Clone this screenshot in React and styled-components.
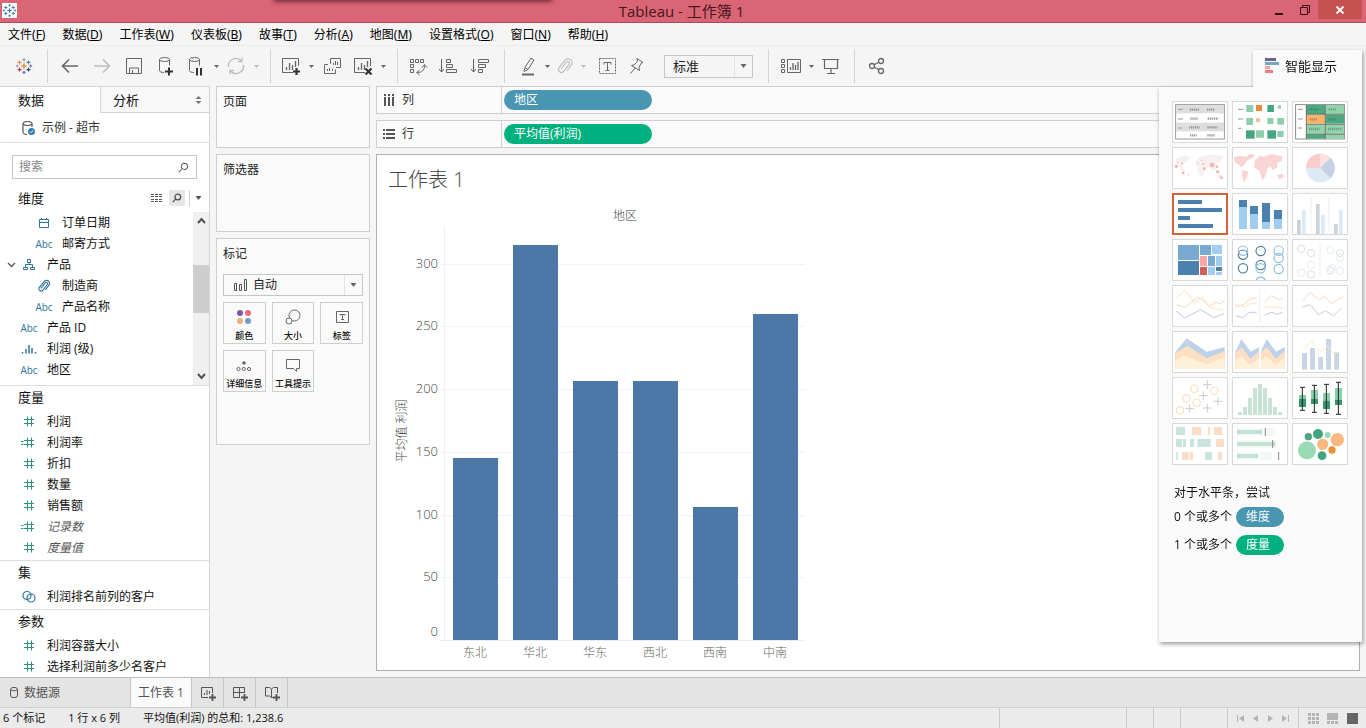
import React from "react";
import styled, { createGlobalStyle } from "styled-components";

const ui = '"Open Sans", "Noto Sans CJK SC", sans-serif';

const Global = createGlobalStyle`
  * { box-sizing: border-box; }
  body { margin: 0; background: #f5f5f5; font: 12px/16px ${ui}; color: #111; }
  button, input, select { font: inherit; color: inherit; }
  button { padding: 0; border: 0; background: none; cursor: pointer; }
  h1, h2, h3, p { margin: 0; font-weight: 400; }
  svg { display: block; flex: none; }
  ul { margin: 0; padding: 0; list-style: none; }
`;

/* ---------- frame ---------- */
const Window = styled.div`
  position: relative;
  display: flex;
  flex-direction: column;
  height: 100vh;
  min-height: 640px;
  overflow: hidden;
`;
const TitleBar = styled.header`
  position: relative;
  flex: none;
  display: flex;
  align-items: flex-start;
  height: 23px;
  background: #d96575;
  border-bottom: 1px solid #a94b58;
`;
const SnapShadow = styled.span`
  position: absolute;
  top: -4px;
  left: 276px;
  width: 274px;
  height: 4px;
  box-shadow: 0 0 4px 2px rgba(60, 10, 20, 0.6);
`;
const AppMark = styled.span`
  margin: 3px 0 0 2px;
  background: #fff;
`;
const Caption = styled.h1`
  flex: 1;
  padding-left: 80px;
  text-align: center;
  font-size: 15px;
  line-height: 23px;
  color: #47161d;
`;
const WinButton = styled.button`
  display: grid;
  place-items: center;
  width: ${(p) => (p.$close ? 44 : 26)}px;
  height: 19px;
  background: ${(p) => (p.$close ? "#c75050" : "none")};
  margin-right: ${(p) => (p.$close ? 4 : 0)}px;
`;
const MenuBar = styled.nav`
  flex: none;
  display: flex;
  gap: 17px;
  align-items: center;
  height: 23px;
  padding: 2px 0 0 8px;
  border-bottom: 1px solid #ebebeb;
  font-family: "Noto Sans", "Noto Sans CJK SC", sans-serif;
`;
const MenuItem = styled.button`
  white-space: nowrap;
  color: #000;
`;

/* ---------- toolbar ---------- */
const Toolbar = styled.div`
  flex: none;
  display: flex;
  align-items: center;
  height: 40px;
`;
const Tool = styled.button`
  display: grid;
  place-items: center;
  flex: none;
  width: ${(p) => p.$w || 28}px;
  height: 32px;
  color: ${(p) => (p.$off ? "#bdbdbd" : "#666")};
`;
const Separator = styled.span`
  flex: none;
  width: 1px;
  height: 34px;
  margin: 0 ${(p) => p.$r || 6}px 0 ${(p) => p.$l || 0}px;
  background: #d4d4d4;
`;
const SelectBox = styled.label`
  display: flex;
  align-items: center;
  height: ${(p) => p.$h}px;
  width: ${(p) => p.$w};
  margin-left: ${(p) => p.$ml || 0}px;
  border: 1px solid #c6c6c6;
  color: #555;
`;
const Picker = styled.select`
  flex: 1;
  min-width: 0;
  padding: 0 0 0 ${(p) => p.$pad}px;
  border: 0;
  background: none;
  appearance: none;
  font-size: ${(p) => p.$size || 12}px;
  color: #222;
`;
const PickerArrow = styled.span`
  display: grid;
  place-items: center;
  width: 18px;
  height: 100%;
  border-left: 1px solid #e2e2e2;
  color: #666;
`;

/* ---------- body ---------- */
const Body = styled.div`
  flex: 1;
  min-height: 0;
  display: flex;
  gap: 6px;
  padding-right: 6px;
`;
const DataPane = styled.aside`
  width: 210px;
  flex: none;
  overflow: hidden;
  background: #fff;
  border-top: 1px solid #d4d4d4;
  border-right: 1px solid #d4d4d4;
`;
const PaneTabs = styled.div`
  display: flex;
  height: 26px;
`;
const PaneTab = styled.button`
  display: flex;
  align-items: center;
  justify-content: space-between;
  width: ${(p) => (p.$active ? "100px" : "auto")};
  flex: ${(p) => (p.$active ? "none" : 1)};
  padding: 0 7px ${(p) => (p.$active ? 1 : 0)}px ${(p) => (p.$active ? 18 : 12)}px;
  font-size: 13px;
  background: ${(p) => (p.$active ? "#fff" : "#f8f8f8")};
  border: solid #d4d4d4;
  border-width: ${(p) => (p.$active ? 0 : "0 0 1px 1px")};
`;
const DataSource = styled.div`
  display: flex;
  align-items: center;
  gap: 6px;
  height: 30px;
  padding-left: 22px;
  color: #333;
  border-bottom: 1px solid #dedede;
`;
const SearchBox = styled.label`
  display: flex;
  align-items: center;
  height: 24px;
  margin: 12px 12px 0;
  padding-right: 7px;
  border: 1px solid #c6c6c6;
  color: #555;
`;
const SearchInput = styled.input`
  flex: 1;
  min-width: 0;
  padding: 0 6px;
  border: 0;
  outline: 0;
  background: none;
  &::placeholder { color: #888; opacity: 1; }
`;
const Section = styled.section`
  border-top: ${(p) => (p.$first ? 0 : 1)}px solid #dedede;
  padding-bottom: ${(p) => (p.$first ? 0 : 2)}px;
`;
const SectionHead = styled.div`
  display: flex;
  align-items: center;
  height: ${(p) => (p.$tall ? 33 : 25)}px;
  padding: ${(p) => (p.$tall ? "5px 2px 0 18px" : "0 2px 3px 18px")};
`;
const SectionTitle = styled.h2`
  flex: 1;
  font-size: 13px;
`;
const HeadTool = styled.button`
  display: grid;
  place-items: center;
  width: ${(p) => p.$w || 16}px;
  height: 16px;
  margin-left: 4px;
  color: #555;
  background: ${(p) => (p.$on ? "#e6e6e6" : "none")};
  border-left: ${(p) => (p.$rule ? 1 : 0)}px solid #ccc;
`;
const ScrollArea = styled.div`
  display: flex;
  height: 173px;
`;
const FieldList = styled.ul`
  flex: 1;
`;
const FieldRow = styled.li`
  display: flex;
  align-items: center;
  height: 21px;
  white-space: nowrap;
  font-style: ${(p) => (p.$auto ? "italic" : "normal")};
  color: ${(p) => (p.$auto ? "#555" : "#111")};
`;
const Indent = styled.span`
  display: flex;
  justify-content: flex-end;
  width: ${(p) => (p.$nested ? 31 : 16)}px;
  color: #555;
`;
const TypeIcon = styled.span`
  display: grid;
  place-items: center;
  width: 26px;
  margin-right: 5px;
  font-size: 10px;
  font-style: normal;
  font-weight: 500;
  color: ${(p) => (p.$measure ? "#2f9179" : "#2f749c")};
`;
const ScrollBar = styled.div`
  display: flex;
  flex-direction: column;
  align-items: center;
  width: 16px;
  padding: 5px 0;
  background: #f0f0f0;
  color: #505050;
`;
const ScrollThumb = styled.span`
  width: 16px;
  height: 48px;
  margin: 40px 0 auto;
  background: #cdcdcd;
`;

/* ---------- cards ---------- */
const Cards = styled.div`
  flex: none;
  display: flex;
  flex-direction: column;
  gap: 6px;
  width: 154px;
`;
const Card = styled.section`
  height: ${(p) => p.$h}px;
  padding: 7px 6px 6px;
  background: #fafafa;
  border: 1px solid #cfcfcf;
`;
const CardTitle = styled.h2`
  font-size: 12px;
  color: #222;
`;
const MarkGrid = styled.div`
  display: grid;
  grid-template-columns: repeat(3, 1fr);
  gap: 6px;
  margin-top: 6px;
`;
const MarkButton = styled.button`
  display: flex;
  flex-direction: column;
  align-items: center;
  justify-content: space-between;
  height: 42px;
  padding-top: 4px;
  font-size: 9px;
  font-weight: 500;
  line-height: 15px;
  white-space: nowrap;
  background: #fafafa;
  border: 1px solid #cfcfcf;
  color: #111;
  svg { color: #666; }
`;
const MarkType = styled.div`
  margin-top: 12px;
`;

/* ---------- view ---------- */
const View = styled.main`
  flex: 1;
  min-width: 0;
  display: flex;
  flex-direction: column;
  gap: 6px;
  padding-bottom: 6px;
`;
const Shelf = styled.div`
  display: flex;
  align-items: center;
  flex: none;
  height: 28px;
  background: #fafafa;
  border: 1px solid #cfcfcf;
`;
const ShelfLabel = styled.span`
  display: flex;
  align-items: center;
  gap: 7px;
  width: 125px;
  height: 100%;
  padding-left: 6px;
  color: #333;
  border-right: 1px solid #cfcfcf;
  svg { color: #555; }
`;
const Pill = styled.button`
  width: ${(p) => p.$w}px;
  height: 20px;
  margin-left: ${(p) => p.$ml}px;
  padding-left: 10px;
  text-align: left;
  line-height: 18px;
  color: #fff;
  border-radius: 10px;
  background: ${(p) => (p.$measure ? "#00b180" : "#4996b2")};
`;
const Worksheet = styled.section`
  flex: 1;
  min-height: 0;
  overflow: hidden;
  padding: 11px;
  background: #fff;
  border: 1px solid #b0b0b0;
`;
const SheetTitle = styled.h2`
  margin-bottom: 6px;
  font-size: 20px;
  font-weight: 300;
  line-height: 28px;
  color: #444;
`;

/* ---------- show me ---------- */
const ShowMe = styled.aside`
  position: absolute;
  top: 50px;
  right: 4px;
  width: 203px;
  filter: drop-shadow(1px 2px 2px rgba(0, 0, 0, 0.4));
`;
const ShowMeTab = styled.button`
  display: flex;
  align-items: center;
  gap: 6px;
  width: 109px;
  height: 37px;
  margin-left: auto;
  padding: 0 0 5px 11px;
  font-size: 13px;
  background: #fafafa;
`;
const ShowMeBody = styled.div`
  height: 555px;
  padding: 14px 13px;
  background: #fafafa;
`;
const Thumbs = styled.div`
  display: grid;
  grid-template-columns: repeat(3, 56px);
  gap: 4px;
  margin-bottom: 17px;
`;
const Thumb = styled.button`
  width: 56px;
  height: 42px;
  background: #fff;
  border: 1px solid ${(p) => (p.$on ? "#cf6238" : "#d9d9d9")};
  box-shadow: ${(p) => (p.$on ? "inset 0 0 0 1px #cf6238" : "none")};
`;
const Hint = styled.p`
  display: flex;
  align-items: center;
  height: ${(p) => (p.$tall ? 28 : 21)}px;
  padding-left: 2px;
`;

/* ---------- bottom ---------- */
const SheetTabs = styled.nav`
  flex: none;
  display: flex;
  height: 31px;
  background: #e4e4e4;
  border-top: 1px solid #bdbdbd;
  border-bottom: 1px solid #cfcfcf;
`;
const SheetTab = styled.button`
  display: flex;
  align-items: center;
  justify-content: ${(p) => (p.$start ? "flex-start" : "center")};
  gap: 5px;
  width: ${(p) => p.$w}px;
  padding-left: ${(p) => (p.$start ? 9 : 0)}px;
  color: #555;
  background: ${(p) => (p.$active ? "#fafafa" : "none")};
  border-right: 1px solid #c6c6c6;
`;
const StatusBar = styled.footer`
  flex: none;
  display: flex;
  align-items: center;
  gap: 23px;
  height: 20px;
  padding-left: 3px;
  font-size: 11px;
  background: #ebebeb;
`;
const StatusCells = styled.div`
  display: flex;
  align-self: stretch;
  margin-left: auto;
`;
const StatusCell = styled.div`
  display: flex;
  align-items: center;
  justify-content: space-evenly;
  width: ${(p) => p.$w}px;
  border-left: 1px solid #c9c9c9;
`;
const StatusButton = styled.button`
  display: grid;
  place-items: center;
  color: ${(p) => p.$c || "#b4b4b4"};
`;

/* ---------- icons ---------- */
const Icon = ({ s = 20, w = s, h = s, sw = 1, children }) => (
  <svg width={w} height={h} viewBox={`0 0 ${w} ${h}`} fill="none" stroke="currentColor" strokeWidth={sw} aria-hidden="true">
    {children}
  </svg>
);
const Plus = ({ x, y, r, c, w = 1 }) => <path d={`M${x - r} ${y}h${r * 2}M${x} ${y - r}v${r * 2}`} stroke={c} strokeWidth={w} />;
const TableauMark = ({ s, mono }) => {
  const k = (c) => mono || c;
  return (
    <svg width={s} height={s} viewBox="0 0 20 20" fill="none" aria-hidden="true">
      <Plus x={10} y={10} r={3} c={k("#eb8a3c")} w={1.5} />
      <Plus x={5} y={6} r={2.2} c={k("#eb8a3c")} w={1.2} />
      <Plus x={15} y={6} r={2.2} c={k("#5b879b")} w={1.2} />
      <Plus x={5} y={14} r={2.2} c={k("#c2334b")} w={1.2} />
      <Plus x={15} y={14} r={2.2} c={k("#1f447e")} w={1.2} />
      <Plus x={10} y={3} r={1.9} c={k("#7099a6")} />
      <Plus x={10} y={17} r={1.9} c={k("#59588c")} />
      <Plus x={2.5} y={10} r={1.6} c={k("#8a8fb8")} />
      <Plus x={17.5} y={10} r={1.6} c={k("#59588c")} />
    </svg>
  );
};
const Caret = () => (
  <svg width="7" height="4" viewBox="0 0 7 4" fill="currentColor" aria-hidden="true"><path d="M0.5 0h6L3.5 4z" /></svg>
);
const SmallCaret = () => (
  <svg width="5" height="3" viewBox="0 0 5 3" fill="currentColor" aria-hidden="true"><path d="M0 0h5L2.500 3z" /></svg>
);
const Magnifier = ({ s = 11, sw = 1.2 }) => (
  <svg width={s} height={s} viewBox="0 0 12 12" fill="none" stroke="currentColor" strokeWidth={sw} aria-hidden="true">
    <circle cx="7" cy="4.7" r="3.4" /><path d="M4.6 7.1L1 11" />
  </svg>
);
const Clip = ({ s = 18, sw = 1.1 }) => (
  <svg width={s} height={s} viewBox="0 0 18 18" fill="none" stroke="currentColor" strokeWidth={sw} aria-hidden="true">
    <path d="M5 12L10.500 5a1.700 1.700 0 0 1 2.700 2.100L7.700 14.300a2.900 2.900 0 0 1-4.600-3.600L9 3.300a3.900 3.900 0 0 1 6.200 4.800L10.800 14" />
  </svg>
);
const Database = ({ children }) => (
  <Icon><ellipse cx="8.500" cy="3.500" rx="5" ry="2" /><path d="M3.500 3.500v11c0 1.200 2 2 4.500 2M13.500 3.500v6" />{children}</Icon>
);
const bars = <path d="M5.500 14v-3M8.500 14V7M11.500 14V9M14.500 11V5" strokeWidth="1.300" />;
const AddChart = ({ mark }) => (
  <Icon>
    <path d="M17.500 10V2.500h-16v14H12" />{bars}
    {mark === "plus" ? <path d="M12 15.500h7M15.500 12v7" strokeWidth="2.200" stroke="#333" /> : <path d="M12.500 12.500l6 6M18.500 12.500l-6 6" strokeWidth="2.200" stroke="#333" />}
  </Icon>
);
const Hash = ({ calc }) => (
  <svg width="16" height="12" viewBox="0 0 16 12" fill="none" stroke="currentColor" aria-hidden="true">
    <path d="M3 3.500h10M3 7.500h10M6.500 0.500v10M10.500 0.500v10" />
    {calc && <path d="M0 4.500h2.500M0 7.500h2.500" />}
  </svg>
);
const Sets = () => <Icon w={16} h={14} sw={1.200}><circle cx="6" cy="5.500" r="4" /><circle cx="10" cy="8" r="4" /></Icon>;
const Hierarchy = () => <Icon w={12} h={12}><path d="M4.500 0.500h3v3h-3zM0.500 8.500h4v2h-4zM7.500 8.500h4v2h-4zM6 3.500v2M2.500 8.500v-3h7v3" /></Icon>;
const Calendar = () => <Icon w={12} h={12}><path d="M1.500 2.500h9v8h-9zM1.500 5.500h9M3.500 1v2M8.500 1v2" /></Icon>;
const Bins = () => <Icon w={16} h={12} sw={1.500}><path d="M1.500 10.500V9M5 10.500V6M8 10.500V2M11 10.500V5M14.500 10.500V9" /></Icon>;
const Chevron = ({ d = "M1 2l3.500 3.500L8 2", sw = 1.300 }) => <Icon w={9} h={8} sw={sw}><path d={d} /></Icon>;

/* ---------- thumbnails (three drawing units to a pixel) ---------- */
const R = ({ c, l }) => l.map((r, i) => <rect key={i} x={r[0]} y={r[1]} width={r[2]} height={r[3]} fill={c} />);
const C = ({ c, l, w = 2.5 }) => l.map((r, i) => <circle key={i} cx={r[0]} cy={r[1]} r={r[2]} fill="none" stroke={c} strokeWidth={w} />);
const D = ({ c, l }) => l.map((r, i) => <circle key={i} cx={r[0]} cy={r[1]} r={r[2]} fill={c} />);
const L = ({ c, d, w = 3 }) => <path d={d} fill="none" stroke={c} strokeWidth={w} />;

const THUMBS = [
  ["文本表", <>
    <rect x="11" y="11" width="146" height="103" fill="#fff" stroke="#888" strokeWidth="2.500" />
    <R c="#dedede" l={[[12, 12, 144, 25], [12, 65, 144, 26]]} />
    <L c="#999" d="M18 25h15M18 54h15M18 81h12" />
    <path d="M53 26h30M105 26h24M55 53h22M107 53h32M51 79h32M106 79h31M54 103h20M106 103h24" stroke="#999" strokeWidth="7" strokeDasharray="4 2" />
  </>],
  ["热图", <>
    <L c="#999" d="M18 25h15M18 54h15M18 82h10" />
    <R c="#8dceab" l={[[43, 12, 21, 21], [43, 51, 20, 21], [72, 88, 24, 22], [106, 51, 18, 18], [136, 51, 20, 20], [136, 90, 19, 18]]} />
    <R c="#45a681" l={[[106, 12, 20, 21], [42, 88, 26, 25], [106, 88, 26, 25]]} />
    <R c="#eb8a3c" l={[[72, 12, 18, 18]]} /><R c="#f7bd8e" l={[[72, 52, 12, 11]]} /><R c="#9ec9b4" l={[[137, 13, 10, 10]]} />
  </>],
  ["突出显示表", <>
    <rect x="11" y="11" width="146" height="103" fill="#fff" stroke="#777" strokeWidth="2.500" />
    <R c="#4aa982" l={[[43, 12, 56, 27], [101, 42, 55, 26], [43, 101, 56, 12]]} />
    <R c="#92d3ac" l={[[101, 12, 55, 27], [43, 71, 56, 28], [101, 71, 55, 28], [101, 101, 55, 12]]} />
    <R c="#f9b26c" l={[[43, 42, 56, 26]]} />
    <L c="#5b5f50" w={2.500} d="M43 12v102M100 12v102M43 40h114M43 70h114M43 100h114" />
    <L c="#999" d="M18 25h15M18 54h15M18 81h12" />
    <path d="M51 25h30M110 25h24M53 55h24M110 55h24M51 84h32M108 84h42" stroke="#3d5a48" opacity=".4" strokeWidth="7" strokeDasharray="4 2" />
  </>],
  ["符号地图", <>
    <path d="M12 35l24-10 18 6-10 14-14 10 10 22-4 14-10-30-14-12zM70 42l16-14 34-6 34 6-4 12-18 10 2 14-14 8-10-12-8 6-12 26-12-18zM136 84l14-4 4 10-14 4z" fill="#f8f0f0" />
    <D c="#f0b4b5" l={[[13, 58, 5], [30, 49, 3], [94, 51, 3], [120, 54, 7], [97, 65, 4], [135, 59, 4], [137, 74, 5], [33, 78, 4], [148, 92, 4], [50, 83, 2], [76, 48, 2], [88, 40, 2], [17, 46, 2]]} />
  </>],
  ["填充地图", <>
    <path d="M6 32l20-5 18 4 6-6 16 2-10 8-12 5-6 12-10 8-10-10-8-4zM32 70l16 4-2 14-10 16-6-20zM70 40l14-12 12 2 22-8 34 8-4 12-14 5 1 14-12 8-8-12-10 8-4 20-10 14-8-28-16-10zM136 86l14-6 6 10-14 6zM48 24l18-2-4 8z" fill="#f9d5d4" stroke="#f5c4c4" />
  </>],
  ["饼图", <>
    <circle cx="85" cy="63" r="43" fill="#dde9f5" />
    <path d="M85 63H42a43 43 0 0 1 43-43z" fill="#fbcccc" /><path d="M85 63V20a43 43 0 0 1 30 12z" fill="#fde1e0" /><path d="M85 63l30-31a43 43 0 0 1 0 62z" fill="#c5d2e5" />
  </>],
  ["水平条", <R c="#4a81ae" l={[[18, 21, 72, 12], [18, 45, 132, 12], [18, 69, 36, 12], [18, 93, 105, 12]]} />],
  ["堆叠条", <>
    <R c="#4a81ae" l={[[21, 21, 24, 21], [54, 39, 24, 24], [90, 30, 24, 57], [126, 51, 24, 27]]} />
    <R c="#a0cdf0" l={[[21, 42, 24, 66], [54, 63, 24, 45], [90, 87, 24, 21], [126, 78, 24, 30]]} />
  </>],
  ["并排条", <>
    <L c="#e4e4e4" w={2} d="M57 12v102M111 12v102" />
    <R c="#ccd2d9" l={[[15, 81, 11, 42], [72, 33, 11, 90], [126, 93, 11, 30]]} /><R c="#dbeaf6" l={[[30, 51, 11, 72], [87, 66, 11, 57], [141, 51, 11, 72]]} />
  </>],
  ["树状图", <>
    <R c="#79a9d1" l={[[18, 18, 63, 45], [84, 18, 33, 30], [108, 51, 21, 30]]} /><R c="#4a81ae" l={[[18, 66, 63, 42], [132, 84, 18, 12]]} />
    <R c="#a0cdf0" l={[[120, 18, 30, 27], [132, 51, 18, 30], [108, 84, 21, 24], [132, 99, 18, 9]]} /><R c="#f9a8a5" l={[[84, 51, 21, 30]]} /><R c="#d35d58" l={[[84, 84, 21, 24]]} />
  </>],
  ["圆视图", <>
    <C c="#527da0" w={3.500} l={[[33, 47, 14], [33, 88, 14], [86, 36, 14], [86, 78, 14]]} />
    <C c="#91bddc" w={3.500} l={[[33, 35, 14], [140, 35, 14], [140, 57, 14], [86, 88, 14], [140, 90, 14]]} /><L c="#91bddc" w={3.500} d="M73 123a14 14 0 0 1 26 0" />
  </>],
  ["并排圆", <>
    <L c="#e4e4e4" w={2} d="M84 12v102" /><C c="#dce0e4" w={3} l={[[27, 30, 11], [57, 42, 11], [57, 106, 11], [144, 42, 11], [115, 94, 11]]} />
    <C c="#e8eef3" w={3} l={[[57, 78, 11], [28, 101, 11], [115, 33, 11], [144, 56, 11], [144, 95, 11], [120, 88, 11]]} />
  </>],
  ["连续线", <><L c="#fae4bf" d="M14 37l24-21 32 38 22-18 19 29 25 7 18 2" /><L c="#f9d7bd" d="M14 60l26 6 38-30 34 27 20-12 12 6 14-12" /><L c="#bfcadb" d="M12 78l26 21 48-25 40 24 30-12" /></>],
  ["离散线", <><L c="#e4e4e4" w={2} d="M83 12v102" /><L c="#fae4bf" d="M10 58l30 8 15-10h20M98 66h18l36 2" /><L c="#f9d7bd" d="M10 66l26-8 18-16 20-4M98 51l20-19 20 10h16" /><L c="#bfcadb" d="M12 92l20 6 20-16h22M98 90l22-8 14 6 18-6" /></>],
  ["双线", <><L c="#f8d9c5" d="M32 48l22-26 28 22 16-10 20 22 36-22" /><L c="#c6cee0" d="M32 66l22-7 26 30 20-12 24 16 24-24" /></>],
  ["连续面积图", <><path d="M10 64l34-42 60 40 54-14v66H10z" fill="#bdd2e8" /><path d="M10 66l36-22 58 38 54-22v54H10z" fill="#fde0c2" /><path d="M10 88l26-14 68 26 54-22v36H10z" fill="#fff0da" /></>],
  ["离散面积图", <>{[0, 76].map((x) => <g key={x} transform={`translate(${x} 0)`}><path d="M10 64l18-40 28 38 26-14v66H10z" fill="#bdd2e8" /><path d="M10 66l18-18 28 36 26-24v54H10z" fill="#fddfc3" /><path d="M10 88l18-12 28 26 26-22v34H10z" fill="#fff0da" /></g>)}<R c="#fff" l={[[82, 12, 5, 104]]} /></>],
  ["双组合", <><R c="#c8d5e4" l={[[30, 66, 15, 50], [54, 51, 15, 65], [79, 78, 14, 38], [102, 24, 15, 92], [127, 63, 14, 53]]} /><L c="#faebca" d="M36 54l22-26 28 36 20-18 20 22 14-6" /></>],
  ["散点图", <><C c="#fadfc0" w={3.500} l={[[67, 35, 11], [43, 64, 11], [74, 77, 11], [127, 41, 11], [24, 100, 11]]} /><L c="#c7ccd4" d="M106 10v26M93 23h26M94 43v26M81 56h26M138 60v26M125 73h26M53 82v26M40 95h26M106 80v26M93 93h26" /></>],
  ["直方图", <R c="#c7e3d6" l={[[18, 105, 12, 9], [33, 90, 12, 24], [48, 63, 12, 51], [63, 33, 12, 81], [78, 21, 12, 93], [93, 33, 12, 81], [108, 63, 12, 51], [123, 90, 12, 24], [138, 105, 12, 9]]} />],
  ["盒须图", <><R c="#89cfaa" l={[[21, 54, 21, 12], [57, 39, 21, 27], [93, 48, 21, 24], [129, 33, 21, 36]]} /><R c="#39976f" l={[[21, 66, 21, 24], [57, 66, 21, 15], [93, 72, 21, 24], [129, 69, 21, 15]]} /><L c="#222" d="M31 31v69M24 31h15M24 100h15M67 25v81M60 25h15M60 106h15M103 22v87M96 22h15M96 109h15M139 16v96M132 16h15M132 112h15" /></>],
  ["甘特图", <><R c="#c9e5db" l={[[12, 12, 27, 24], [12, 48, 18, 24], [33, 48, 9, 24], [54, 48, 12, 24], [76, 48, 40, 24], [12, 87, 5, 24], [99, 87, 21, 24]]} /><R c="#fbdcc4" l={[[60, 12, 27, 24], [108, 12, 6, 24], [126, 12, 24, 24], [132, 48, 24, 24], [30, 87, 20, 24], [54, 87, 9, 24], [138, 87, 12, 24]]} /></>],
  ["标靶图", <><R c="#f3f7f5" l={[[15, 15, 115, 24], [15, 51, 120, 24], [15, 87, 105, 24]]} /><R c="#c4e2d4" l={[[15, 21, 75, 12], [15, 57, 115, 12], [15, 93, 63, 12]]} /><L c="#888" d="M100 15v24M122 51v24M140 87v24" /></>],
  ["填充气泡图", <><D c="#9adbb5" l={[[45, 82, 27], [107, 36, 9]]} /><D c="#3fa680" l={[[78, 33, 15], [90, 98, 13]]} /><D c="#52a282" l={[[49, 41, 11]]} /><D c="#fbb780" l={[[92, 64, 17], [136, 50, 20]]} /><D c="#ec9232" l={[[120, 81, 11]]} /></>],
];

/* ---------- chart ---------- */
const REGIONS = [["东北", 145], ["华北", 314.7], ["华东", 206.4], ["西北", 206.4], ["西南", 106], ["中南", 259.7]];
const BASE = 440;
const LEFT = 57;
const BAND = 60;
const yOf = (v) => Math.round(BASE - v * 1.255);
const ChartSvg = styled.svg`
  font-size: 12px;
  font-weight: 300;
  fill: #444;
`;
const Chart = () => (
  <ChartSvg width="420" height="462" viewBox="0 0 420 462" role="img" aria-label="各地区平均利润">
    <text x="237" y="20" textAnchor="middle">地区</text>
    <text transform="translate(18 231) rotate(-90)" textAnchor="middle">平均值 利润</text>
    <path d={`M${LEFT - 0.5} 26V${BASE}`} stroke="#f0f0f0" />
    {[0, 50, 100, 150, 200, 250, 300].map((t) => (
      <g key={t}>
        <path d={`M${LEFT - 4} ${yOf(t) + 0.5}H417`} stroke={t ? "#f3f3f3" : "#ebebeb"} />
        <text x="50" y={t ? yOf(t) + 4 : BASE - 4} fontSize="13" textAnchor="end">{t}</text>
      </g>
    ))}
    {REGIONS.map(([name, v], i) => (
      <g key={name}>
        <rect x={LEFT + 8 + i * BAND} y={yOf(v)} width="45" height={BASE - yOf(v)} fill="#4c78a8" />
        <text x={LEFT + 30 + i * BAND} y="457" textAnchor="middle" fill="#666">{name}</text>
      </g>
    ))}
  </ChartSvg>
);

const MENUS = [["文件", "F"], ["数据", "D"], ["工作表", "W"], ["仪表板", "B"], ["故事", "T"], ["分析", "A"], ["地图", "M"], ["设置格式", "O"], ["窗口", "N"], ["帮助", "H"]];

const Drop = ({ off, label }) => <Tool $w={12} $off={off} aria-label={label}><SmallCaret /></Tool>;
const Field = ({ icon, name, nested, open, measure, auto }) => (
  <FieldRow $auto={auto}>
    <Indent $nested={nested}>{open && <Chevron />}</Indent>
    <TypeIcon $measure={measure}>{icon}</TypeIcon>
    {name}
  </FieldRow>
);

export default function App() {
  return (
    <Window>
      <Global />
      <TitleBar>
        <SnapShadow />
        <AppMark><TableauMark s={15} mono="#3279b2" /></AppMark>
        <Caption>Tableau - 工作簿 1</Caption>
        <WinButton aria-label="最小化"><Icon w={10} h={12}><path d="M1 10h8" stroke="#3a0d14" strokeWidth="2" /></Icon></WinButton>
        <WinButton aria-label="还原"><Icon w={12} h={12}><path d="M1.500 3.500h7v7h-7zM3.500 3.500v-2h7v7h-2" stroke="#3a0d14" /></Icon></WinButton>
        <WinButton $close aria-label="关闭"><Icon w={10} h={10}><path d="M1.500 1.500l7 7M8.500 1.500l-7 7" stroke="#fff" strokeWidth="1.800" /></Icon></WinButton>
      </TitleBar>
      <MenuBar>
        {MENUS.map(([n, k]) => <MenuItem key={k}>{n}(<u>{k}</u>)</MenuItem>)}
      </MenuBar>

      <Toolbar>
        <Tool $w={47} aria-label="开始页"><TableauMark s={18} /></Tool>
        <Separator />
        <Tool $w={32} aria-label="撤消"><Icon sw={1.600}><path d="M18 10H3M9 3.500L2.500 10 9 16.500" /></Icon></Tool>
        <Tool $w={32} $off aria-label="重做"><Icon sw={1.600}><path d="M2 10h15M11 3.500l6.500 6.500-6.500 6.500" /></Icon></Tool>
        <Tool $w={32} aria-label="保存"><Icon><path d="M2.500 2.500h15v15h-15zM5.500 17v-5h9v5M8.500 17v-3" /></Icon></Tool>
        <Tool $w={32} aria-label="新建数据源"><Database><path d="M9 15.500h8M13 11.500v8" strokeWidth="2" stroke="#333" /></Database></Tool>
        <Tool aria-label="暂停自动更新"><Database><path d="M11 12v7.500M15 12v7.500" strokeWidth="2" stroke="#333" /></Database></Tool>
        <Drop label="自动更新选项" />
        <Tool $off aria-label="运行更新"><Icon sw={1.300}><path d="M2.500 11a7.500 7.500 0 0 1 13-6M17.500 9a7.500 7.500 0 0 1-13 6M12 5.500h4v-4M8 14.500H4v4" /></Icon></Tool>
        <Drop off label="更新选项" />
        <Separator $l={8} />
        <Tool aria-label="新建工作表"><AddChart mark="plus" /></Tool>
        <Drop label="新建选项" />
        <Tool $w={32} aria-label="复制工作表"><Icon><path d="M7.500 8V2.500h10v9H13M10.500 9V7M12.500 9V5M14.500 9V6M5 8.500H1.500v9h11v-4M4.500 15v-2M6.500 15v-3M9.500 15v-2" /></Icon></Tool>
        <Tool aria-label="清除工作表"><AddChart mark="x" /></Tool>
        <Drop label="清除选项" />
        <Separator $l={8} />
        <Tool aria-label="交换行和列"><Icon><path d="M2.500 3.500h3v3h-3zM7.500 3.500h3v3h-3zM12.500 3.500h3v3h-3zM2.500 8.500h3v3h-3zM2.500 13.500h3v3h-3zM9 16.500c5 0 7.500-2 7.500-7M11.500 14l-3 2.500 3 2.500M14 11.500l2.500-3 2.500 3" /></Icon></Tool>
        <Tool $w={32} aria-label="升序排序"><Icon><path d="M3.500 3v13M1 13l2.500 3L6 13M8.500 3.500h4v3h-4zM8.500 8.500h6v3h-6zM8.500 13.500h10v3h-10z" /></Icon></Tool>
        <Tool $w={32} aria-label="降序排序"><Icon><path d="M3.500 3v13M1 13l2.500 3L6 13M8.500 3.500h10v3h-10zM8.500 8.500h7v3h-7zM8.500 13.500h4v3h-4z" /></Icon></Tool>
        <Separator $l={8} $r={12} />
        <Tool $w={24} aria-label="突出显示"><Icon><path d="M6 11.500l6-9.500 3 2-6 9.500-4 2zM6 11.500l3 2" /><path d="M3 18.500h12" strokeWidth="2" /></Icon></Tool>
        <Drop label="突出显示选项" />
        <Tool $w={24} $off aria-label="组成员"><Clip /></Tool>
        <Drop off label="组选项" />
        <Tool $w={36} aria-label="显示标记标签"><Icon><path d="M2.500 2.500h16v15h-16z" strokeDasharray="2 1" /><path d="M7 8.500v-2h7v2M10.500 6.500v8M8.500 14.500h4" /></Icon></Tool>
        <Tool $w={24} aria-label="固定轴"><Icon><path d="M10 2.500l6 4-2 .8-2 4.200.5 3-8-5 3-.8 3-3.700zM8 12l-4.500 5.500" /></Icon></Tool>
        <SelectBox $h={23} $w="89px" $ml={15}>
          <Picker $pad={8} $size={13} aria-label="适合" defaultValue="标准"><option>标准</option><option>整个视图</option></Picker>
          <PickerArrow><Caret /></PickerArrow>
        </SelectBox>
        <Separator $l={15} $r={8} />
        <Tool aria-label="显示/隐藏卡"><Icon><path d="M0.500 3.500h3v3h-3zM0.500 8.500h3v3h-3zM0.500 13.500h3v3h-3zM6.500 3.500h13v13h-13z" /><path d="M9.500 14v-3M12 14V7M14.500 14V9M17 14V6" strokeWidth="1.300" /></Icon></Tool>
        <Drop label="卡选项" />
        <Tool aria-label="演示模式"><Icon><path d="M1 3.500h17M3.500 3.500v9h13v-9M10 12.500v5M6 17.500h8" strokeWidth="1.200" /></Icon></Tool>
        <Separator $l={9} $r={8} />
        <Tool aria-label="共享"><Icon sw={1.300}><circle cx="5" cy="10" r="2.500" /><circle cx="14" cy="5" r="2.500" /><circle cx="14" cy="15" r="2.500" /><path d="M7.200 8.800l4.600-2.500M7.200 11.200l4.600 2.500" /></Icon></Tool>
      </Toolbar>

      <Body>
        <DataPane>
          <PaneTabs>
            <PaneTab $active>数据</PaneTab>
            <PaneTab>分析<svg width="7" height="8" viewBox="0 0 7 8" fill="#777" aria-hidden="true"><path d="M3.500 0L6.500 3h-6zM3.500 8l3-3h-6z" /></svg></PaneTab>
          </PaneTabs>
          <DataSource>
            <Icon w={14} h={16}><ellipse cx="5.500" cy="3.500" rx="4.500" ry="2" /><path d="M1 3.500v9c0 1 1.500 2 4 2M10 3.500V7" /><circle cx="9.500" cy="11.500" r="3.500" fill="#2f7cae" stroke="none" /><path d="M8 11.500l1.200 1.200 2-2.400" stroke="#fff" /></Icon>
            示例 - 超市
          </DataSource>
          <SearchBox><SearchInput placeholder="搜索" aria-label="搜索" /><Magnifier sw={1.100} /></SearchBox>
          <Section $first>
            <SectionHead $tall>
              <SectionTitle>维度</SectionTitle>
              <HeadTool aria-label="查看数据"><Icon w={12} h={10}><path d="M0 1.500h12M0 3.500h12M0 6.500h12M0 8.500h12" strokeDasharray="3 1" /></Icon></HeadTool>
              <HeadTool $on aria-label="查找字段"><Magnifier s={10} sw={1.600} /></HeadTool>
              <HeadTool $rule $w={18} aria-label="维度菜单"><Caret /></HeadTool>
            </SectionHead>
            <ScrollArea>
              <FieldList>
                <Field nested icon={<Calendar />} name="订单日期" />
                <Field nested icon="Abc" name="邮寄方式" />
                <Field open icon={<Hierarchy />} name="产品" />
                <Field nested icon={<Clip s={14} sw={1.400} />} name="制造商" />
                <Field nested icon="Abc" name="产品名称" />
                <Field icon="Abc" name="产品 ID" />
                <Field icon={<Bins />} name="利润 (级)" />
                <Field icon="Abc" name="地区" />
              </FieldList>
              <ScrollBar>
                <Chevron sw={2} d="M1 6l3.500-4L8 6" />
                <ScrollThumb />
                <Chevron sw={2} d="M1 2l3.500 4L8 2" />
              </ScrollBar>
            </ScrollArea>
          </Section>
          <Section>
            <SectionHead><SectionTitle>度量</SectionTitle></SectionHead>
            <FieldList>
              <Field measure icon={<Hash />} name="利润" />
              <Field measure icon={<Hash calc />} name="利润率" />
              <Field measure icon={<Hash />} name="折扣" />
              <Field measure icon={<Hash />} name="数量" />
              <Field measure icon={<Hash />} name="销售额" />
              <Field measure auto icon={<Hash calc />} name="记录数" />
              <Field measure auto icon={<Hash />} name="度量值" />
            </FieldList>
          </Section>
          <Section>
            <SectionHead><SectionTitle>集</SectionTitle></SectionHead>
            <FieldList><Field icon={<Sets />} name="利润排名前列的客户" /></FieldList>
          </Section>
          <Section>
            <SectionHead><SectionTitle>参数</SectionTitle></SectionHead>
            <FieldList>
              <Field measure icon={<Hash />} name="利润容器大小" />
              <Field measure icon={<Hash />} name="选择利润前多少名客户" />
            </FieldList>
          </Section>
        </DataPane>

        <Cards>
          <Card $h={62}><CardTitle>页面</CardTitle></Card>
          <Card $h={78}><CardTitle>筛选器</CardTitle></Card>
          <Card $h={207}>
            <CardTitle>标记</CardTitle>
            <MarkType>
              <SelectBox $h={22} $w="100%">
                <Icon w={24} h={14}><path d="M10.500 5.500h2v7h-2zM15.500 6.500h2v6h-2zM20.500 1.500h2v11h-2z" /></Icon>
                <Picker $pad={5} aria-label="标记类型" defaultValue="自动"><option>自动</option><option>条形图</option></Picker>
                <PickerArrow><Caret /></PickerArrow>
              </SelectBox>
            </MarkType>
            <MarkGrid>
              <MarkButton><svg width="20" height="20" viewBox="0 0 20 20" aria-hidden="true"><D c="#7a5aa6" l={[[6, 6, 3]]} /><D c="#ee6a7c" l={[[14, 6, 3]]} /><D c="#f3ad78" l={[[6, 14, 3]]} /><D c="#6f9dc8" l={[[14, 14, 3]]} /></svg>颜色</MarkButton>
              <MarkButton><Icon><circle cx="11.500" cy="8.500" r="5.500" /><circle cx="6" cy="14" r="3" fill="#fafafa" /></Icon>大小</MarkButton>
              <MarkButton><Icon><path d="M4.500 4.500h12v11h-12zM8 8.500V7.500h5v1M10.500 7.500v5M9 12.500h3" /></Icon>标签</MarkButton>
              <MarkButton><Icon><circle cx="10" cy="8" r="1.800" fill="currentColor" stroke="none" /><circle cx="4.500" cy="14" r="1.600" /><circle cx="9.800" cy="14" r="1.600" /><circle cx="15" cy="14" r="1.600" /></Icon>详细信息</MarkButton>
              <MarkButton><Icon><path d="M3.500 4.500h13v9h-3v3l-3-3h-7z" /></Icon>工具提示</MarkButton>
            </MarkGrid>
          </Card>
        </Cards>

        <View>
          <Shelf>
            <ShelfLabel><Icon w={12} h={14} sw={2}><path d="M2 1v2M2 4v9M6 1v2M6 4v9M10 1v2M10 4v9" /></Icon>列</ShelfLabel>
            <Pill $w={148} $ml={2}>地区</Pill>
          </Shelf>
          <Shelf>
            <ShelfLabel><Icon w={12} h={12} sw={2}><path d="M0 2h2M3 2h9M0 6h2M3 6h9M0 10h2M3 10h9" /></Icon>行</ShelfLabel>
            <Pill $w={148} $ml={2} $measure>平均值(利润)</Pill>
          </Shelf>
          <Worksheet>
            <SheetTitle>工作表 1</SheetTitle>
            <Chart />
          </Worksheet>
        </View>
      </Body>

      <ShowMe>
        <ShowMeTab>
          <svg width="15" height="16" viewBox="0 0 15 16" aria-hidden="true"><R c="#6f6480" l={[[1, 0, 11, 3]]} /><R c="#76a5c4" l={[[1, 4, 14, 3]]} /><R c="#f3a3a0" l={[[1, 8, 5, 3]]} /><R c="#e77c7e" l={[[1, 12, 8, 3]]} /></svg>
          智能显示
        </ShowMeTab>
        <ShowMeBody>
          <Thumbs>
            {THUMBS.map(([name, art]) => (
              <Thumb key={name} $on={name === "水平条"} aria-label={name}>
                <svg width="54" height="40" viewBox="3 3 162 120" aria-hidden="true">{art}</svg>
              </Thumb>
            ))}
          </Thumbs>
          <Hint>对于水平条，尝试</Hint>
          <Hint $tall>0 个或多个<Pill $w={48} $ml={4}>维度</Pill></Hint>
          <Hint $tall>1 个或多个<Pill $w={48} $ml={4} $measure>度量</Pill></Hint>
        </ShowMeBody>
      </ShowMe>

      <SheetTabs>
        <SheetTab $w={131} $start><Icon w={10} h={14}><rect x="1.500" y="1.500" width="7" height="10" rx="2.500" /><path d="M2 4c2 1 4 1 6 0" /></Icon>数据源</SheetTab>
        <SheetTab $w={61} $active>工作表 1</SheetTab>
        <SheetTab $w={32} aria-label="新建工作表"><Icon s={18}><path d="M13.500 9V3.500h-11v10H9M5.500 11V9M8 11V6M10.500 10V7" /><path d="M10 13.500h7M13.500 10v7" strokeWidth="1.800" /></Icon></SheetTab>
        <SheetTab $w={32} aria-label="新建仪表板"><Icon s={18}><path d="M13.500 9V3.500h-11v10H9M2.500 8.500h11M8.500 3.500v10" /><path d="M10 13.500h7M13.500 10v7" strokeWidth="1.800" /></Icon></SheetTab>
        <SheetTab $w={32} aria-label="新建故事"><Icon s={18}><path d="M10 13.500H8.500l-2-1.500h-4V3.500h4l2 1.500 2-1.500h4V9M8.500 5v8.500" /><path d="M10 13.500h7M13.500 10v7" strokeWidth="1.800" /></Icon></SheetTab>
      </SheetTabs>
      <StatusBar>
        <span>6 个标记</span>
        <span>1 行 x 6 列</span>
        <span>平均值(利润) 的总和: 1,238.6</span>
        <StatusCells>
          <StatusCell $w={127} />
          <StatusCell $w={27} />
          <StatusCell $w={27} />
          <StatusCell $w={47} />
          <StatusCell $w={71}>
            <StatusButton aria-label="第一张"><svg width="7" height="7" viewBox="0 0 7 7" fill="currentColor"><path d="M0 0h1v7H0zM7 0v7L2 3.500z" /></svg></StatusButton>
            <StatusButton aria-label="上一张"><svg width="5" height="7" viewBox="0 0 5 7" fill="currentColor"><path d="M5 0v7L0 3.500z" /></svg></StatusButton>
            <StatusButton aria-label="下一张"><svg width="5" height="7" viewBox="0 0 5 7" fill="currentColor"><path d="M0 0v7l5-3.500z" /></svg></StatusButton>
            <StatusButton aria-label="最后一张"><svg width="7" height="7" viewBox="0 0 7 7" fill="currentColor"><path d="M6 0h1v7H6zM0 0v7l5-3.500z" /></svg></StatusButton>
          </StatusCell>
          <StatusCell $w={68}>
            <StatusButton aria-label="显示工作表排序程序"><svg width="11" height="11" viewBox="0 0 11 11" fill="currentColor"><path d="M0 0h3v3H0zM4 0h3v3H4zM8 0h3v3H8zM0 4h3v3H0zM4 4h3v3H4zM8 4h3v3H8zM0 8h3v3H0zM4 8h3v3H4zM8 8h3v3H8z" /></svg></StatusButton>
            <StatusButton aria-label="显示缩略图"><svg width="11" height="11" viewBox="0 0 11 11" fill="currentColor"><path d="M0 0h11v7H0zM0 8h3v3H0zM4 8h3v3H4zM8 8h3v3H8z" /></svg></StatusButton>
            <StatusButton $c="#666" aria-label="显示标签"><svg width="11" height="11" viewBox="0 0 11 11" fill="currentColor"><path d="M0 0h11v11H0z" /></svg></StatusButton>
          </StatusCell>
        </StatusCells>
      </StatusBar>
    </Window>
  );
}
